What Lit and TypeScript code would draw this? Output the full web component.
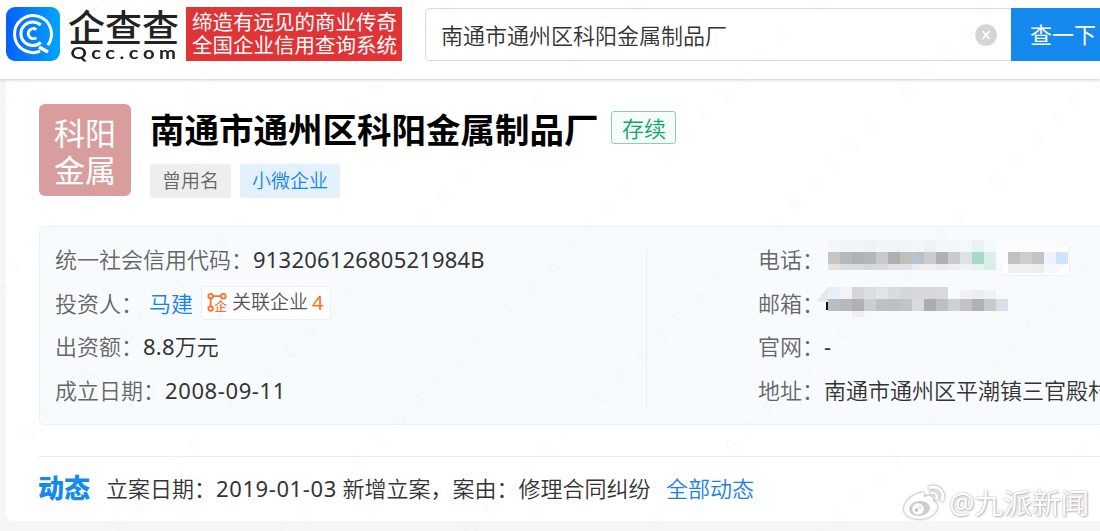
import { LitElement, html, svg, css } from 'lit';
import { customElement, property } from 'lit/decorators.js';

/** One run of mosaic cells: left edge, top edge, cell height and the fills */
interface MosaicRow {
  x: number;
  y: number;
  h: number;
  fills: string[];
}

const CELL = 12;

const PHONE_ROWS: MosaicRow[] = [
  { x: 4, y: 0, h: 12, fills: ['#f4f7f9', '#f1f4f6', '#f1f5f6', '#eff3f5', '#f2f5f7', '#f1f4f6', '#f2f5f7', '#f4f7f9', '#eff2f5', '#f4f7f9', '#f3f6f8', '#f4f8fa', '#e4f4f0', '#f3f9fa'] },
  { x: 4, y: 12, h: 12, fills: ['#c8c4c2', '#b2b8bc', '#adb3b9', '#b1b8b8', '#c9c9cd', '#b0aeb3', '#bfbfbc', '#b9c3cd', '#cdcbcc', '#b0aeb6', '#c7cbcf', '#dfe2e5', '#a8d9c5', '#dceeeb'] },
  { x: 4, y: 24, h: 6, fills: ['#e2e2e4', '#dadcdf', '#d9dbde', '#d7d8db', '#d9dadd', '#e0e1e4', '#e2e4e6', '#ecedef', '#edeff1', '#eaebed', '#eef0f2', '#f1f4f6', '#e5f3ef', '#daeee8'] },
  { x: 184, y: 12, h: 12, fills: ['#c3c1c0', '#cfcdcc', '#c5c4c0', '#eef3fd', '#cfe4fb'] },
  { x: 184, y: 24, h: 9, fills: ['#f0efef', '#f1f0f0', '#eeeded', '#f6f8fc', '#f4f9fe'] },
];

const MAIL_ROWS: MosaicRow[] = [
  { x: 4, y: 0, h: 12, fills: ['#e9eef8', '#f1f3f7', '#d4d6d9', '#dddee0', '#e1e4ec', '#d9dbde', '#d4d7da', '#d6d8db', '#d6d8da', '#d8d9dc'] },
  { x: 136, y: 3, h: 9, fills: ['#eff2f6', '#eaeef1', '#eff2f6'] },
  { x: 4, y: 12, h: 12, fills: ['#b9bdc4', '#b9b7ba', '#b1b0b4', '#c9cdd5', '#bfc1c1', '#bebfbe', '#bdc5cf', '#d9dadc', '#acacb0', '#bfbfc1', '#cfcfd1', '#c2c3c5', '#adb2b5', '#cbc9c6', '#d7dfea'] },
  { x: 28, y: 24, h: 6, fills: ['#edf0f4'] },
];

const cells = (rows: MosaicRow[]) =>
  rows.map(row =>
    row.fills.map((fill, i) => svg`<rect x=${row.x + i * CELL} y=${row.y} width=${CELL} height=${row.h} fill=${fill} />`)
  );

@customElement('info-row')
export class InfoRow extends LitElement {
  /** Field name, printed in front of the value */
  @property({ type: String }) label = '';

  static styles = css`
    :host {
      display: flex;
      align-items: center;
      height: 43.8px;
      white-space: nowrap;
      color: #333;
    }

    .label {
      color: #666;
    }

    .value {
      display: flex;
      align-items: center;
    }
  `;

  render() {
    return html`
      <span class="label">${this.label}：</span>
      <span class="value"><slot></slot></span>
    `;
  }
}

@customElement('app-root')
export class AppRoot extends LitElement {
  static styles = css`
    :host {
      display: block;
      position: relative;
      width: 1100px;
      height: 531px;
      overflow: hidden;
      background: #f6f6f6;
      color: #333;
      font-family: 'Noto Sans', 'Noto Sans CJK SC', sans-serif;
      font-size: 22px;
      font-weight: 350;
      line-height: 1;
      white-space: nowrap;
    }

    * {
      box-sizing: border-box;
    }

    svg {
      display: block;
      flex: none;
      overflow: visible;
    }

    /* Header */
    .header {
      position: relative;
      display: flex;
      align-items: flex-start;
      height: 79px;
      padding: 7px 0 0 6px;
      background: #fff;
      box-shadow: 0 1px 3px rgba(0, 0, 0, 0.2);
    }

    .brand {
      flex: none;
      width: 118px;
      padding-left: 8px;
      color: #222;
      font-family: 'Noto Sans CJK SC', sans-serif;
    }

    .brand__name {
      height: 38px;
      font-size: 37px;
      font-weight: 500;
      line-height: 38px;
    }

    .brand__domain {
      padding-left: 2px;
      font-family: Lato, sans-serif;
      font-size: 17px;
      font-weight: 700;
      letter-spacing: 3.8px;
      line-height: 16px;
      transform: scaleX(1.19);
      transform-origin: left;
    }

    .slogan {
      flex: none;
      width: 216px;
      height: 54px;
      margin-left: 8px;
      padding: 4px 0 0 6px;
      background: #e03436;
      color: #fff;
      font-size: 20.5px;
      font-weight: 400;
      line-height: 23px;
    }

    .search {
      flex: none;
      display: flex;
      align-items: center;
      justify-content: space-between;
      width: 586px;
      height: 53px;
      margin: 1px 0 0 23px;
      padding: 0 14px 0 15px;
      border: 1px solid #d9d9d9;
      border-right: 0;
      border-radius: 5px 0 0 5px;
    }

    .search__button {
      flex: none;
      width: 110px;
      height: 53px;
      margin-top: 1px;
      padding-left: 19px;
      background: #148aee;
      color: #fff;
      font-weight: 400;
      line-height: 53px;
    }

    /* Company card */
    .card {
      height: 442px;
      margin-left: 6px;
      padding: 25px 0 0 33px;
      background: #fff;
      border-radius: 0 0 0 7px;
    }

    .company {
      display: flex;
    }

    .avatar {
      width: 92px;
      height: 92px;
      margin-left: 0.4px;
      padding: 11px 0 0 14.6px;
      border-radius: 6px;
      background: #d99d9d;
      color: #fff;
      font-size: 31px;
      font-weight: 400;
      line-height: 37px;
    }

    .summary {
      margin-left: 18.6px;
    }

    .title {
      display: flex;
      align-items: center;
      height: 53px;
      gap: 13px;
    }

    .title__name {
      margin: 0;
      color: #000;
      font-size: 34.5px;
      font-weight: 700;
    }

    .status {
      width: 65px;
      height: 33px;
      margin-top: -6px;
      border: 1px solid #84d3b1;
      border-radius: 3px;
      background: #f6fcf9;
      color: #0aa965;
      line-height: 32px;
      text-align: center;
    }

    .tags {
      display: flex;
      gap: 9px;
      margin-top: 7px;
    }

    .tag {
      height: 34px;
      padding: 0 12px;
      border-radius: 3px;
      background: #eee;
      color: #666;
      font-size: 19px;
      line-height: 34px;
    }

    .tag--blue {
      background: #e3f1fd;
      color: #1585ee;
    }

    .panel {
      display: flex;
      height: 199px;
      margin-top: 28px;
      padding: 10px 0 0 15px;
      border: 1px solid #e9f2f8;
      border-right: 0;
      border-radius: 6px 0 0 6px;
      background: #f7fbfe;
    }

    .panel__column {
      flex: none;
      width: 591px;
    }

    .panel__divider {
      flex: none;
      width: 1px;
      height: 157px;
      margin: 14px 111px 0 0;
      background: #ececee;
    }

    .link {
      color: #1a80ee;
    }

    .link--person {
      margin-left: 6px;
    }

    .number {
      font-weight: 400;
      letter-spacing: 0.2px;
    }

    .date {
      font-weight: 400;
      letter-spacing: 0.6px;
    }

    .related {
      display: flex;
      align-items: center;
      width: 130px;
      height: 34px;
      margin-left: 8px;
      padding-left: 5px;
      border: 1px solid #eee;
      border-radius: 3px;
      background: #fff;
      color: #555;
      font-size: 19px;
    }

    .related__text {
      margin: 0 4px;
    }

    .related__count {
      color: #ff6f2c;
      font-size: 20px;
      font-weight: 400;
    }

    .related__glyph {
      fill: #ff6f2c;
      font-size: 12.5px;
      font-weight: 500;
    }

    .news {
      display: flex;
      align-items: center;
      height: 63px;
      margin-top: 31px;
      margin-left: -1px;
      border-top: 1px solid #ececec;
    }

    .news__mark {
      width: 68px;
      color: #148aee;
      font-size: 26px;
      font-weight: 900;
    }

    .news__link {
      margin-left: 15.5px;
    }

    /* Overlays */
    .pattern {
      position: absolute;
      inset: 0;
      pointer-events: none;
    }

    .pattern__text {
      font-family: 'Liberation Sans', sans-serif;
      font-size: 19px;
      font-weight: 400;
      fill: #000;
      fill-opacity: 0.015;
    }

    .credit {
      position: absolute;
      right: 11px;
      bottom: 10px;
      display: flex;
      align-items: center;
      gap: 4px;
      color: #fff;
      font-size: 28.6px;
      font-weight: 400;
      text-shadow: 0 0 2px #aaa, 1px 1px 2px #bbb;
    }

    .credit__logo {
      filter: drop-shadow(0 0 1px #aaa) drop-shadow(0 0 1px #ccc);
    }
  `;

  private renderLogo() {
    return html`
      <svg width="54" height="54" viewBox="0 0 54 54" fill="none" stroke="#fff" stroke-width="3">
        <defs>
          <linearGradient id="blue" x1="0" y1="0" x2="1" y2="0">
            <stop offset="0" stop-color="#0560ff" />
            <stop offset="1" stop-color="#02a4ff" />
          </linearGradient>
        </defs>
        <rect width="54" height="54" rx="9" fill="url(#blue)" stroke="none" />
        <path d="M34 44.200A18.500 18.500 0 1 1 41.800 38.200" />
        <path d="M33 40.200L42 45" stroke-width="3.600" />
        <path d="M34.800 18.200A11.800 11.800 0 1 0 34.800 35.400" />
        <path d="M30.300 22.600A5 5 0 1 0 30.300 30.600" />
      </svg>
    `;
  }

  private renderRelatedIcon() {
    return html`
      <svg width="21" height="21" viewBox="0 0 21 21" fill="none" stroke="#ff6f2c" stroke-width="1.800">
        <circle cx="3.600" cy="4.200" r="2.300" />
        <circle cx="16.400" cy="4.200" r="2.300" />
        <circle cx="3.600" cy="16.600" r="2.300" />
        <path d="M6 4.200H14M3.600 6.600V14.200" />
        <text class="related__glyph" x="7.600" y="19" stroke="none">企</text>
      </svg>
    `;
  }

  private renderPhone() {
    return html`
      <svg width="252" height="38" viewBox="0 0 252 38">
        <rect x="177.500" y="3.500" width="68" height="32" rx="3" fill="#fff" stroke="#efefef" />
        <path d="M176 0H241L236 12H184V24H176Z" fill="#fafbfd" />
        ${cells(PHONE_ROWS)}
        <path d="M232 33L244 23V33Z" fill="#fff" />
      </svg>
    `;
  }

  private renderMail() {
    return html`
      <svg width="190" height="32" viewBox="0 0 190 32">
        <path d="M-8 14.500L4 0V14.500Z" fill="#e8e8e6" />
        <rect x="2" y="15" width="3" height="8" fill="#111" />
        ${cells(MAIL_ROWS)}
      </svg>
    `;
  }

  private renderWeibo() {
    return html`
      <svg class="credit__logo" width="42" height="36" viewBox="0 0 42 36" fill="none">
        <path
          fill="#fff"
          d="M17 8C20 6 22 8 21 12C26 10 31 11 30 16C35 18 35 22 33 26C29 32 23 34 16 34C8 34 1 30 1 24C1 17 10 9 17 8Z"
        />
        <ellipse cx="16.500" cy="23.500" rx="10.500" ry="7.500" fill="#cdcdcd" transform="rotate(-8 16.500 23.500)" />
        <circle cx="15" cy="24" r="5.800" fill="#fff" />
        <circle cx="13.500" cy="25" r="1.700" fill="#bbb" />
        <circle cx="17" cy="22.500" r="0.900" fill="#bbb" />
        <path stroke="#fff" stroke-width="3" stroke-linecap="round" d="M27 2.500C35 0 42 7 39 15" />
        <path stroke="#fff" stroke-width="2.600" stroke-linecap="round" d="M28 8C32 7 35 10 33.500 13.500" />
      </svg>
    `;
  }

  render() {
    return html`
      <header class="header">
        ${this.renderLogo()}
        <div class="brand">
          <div class="brand__name">企查查</div>
          <div class="brand__domain">Qcc.com</div>
        </div>
        <div class="slogan">缔造有远见的商业传奇<br />全国企业信用查询系统</div>
        <div class="search">
          <span>南通市通州区科阳金属制品厂</span>
          <svg width="22" height="22" viewBox="0 0 22 22">
            <circle cx="11" cy="11" r="10.800" fill="#d5d5d5" />
            <path d="M7.500 7L14.500 15M14.500 7L7.500 15" stroke="#fff" stroke-width="1.800" />
          </svg>
        </div>
        <div class="search__button">查一下</div>
      </header>

      <main class="card">
        <section class="company">
          <div class="avatar">科阳<br />金属</div>
          <div class="summary">
            <div class="title">
              <h1 class="title__name">南通市通州区科阳金属制品厂</h1>
              <span class="status">存续</span>
            </div>
            <div class="tags">
              <span class="tag">曾用名</span>
              <span class="tag tag--blue">小微企业</span>
            </div>
          </div>
        </section>

        <section class="panel">
          <div class="panel__column">
            <info-row label="统一社会信用代码"><span class="number">91320612680521984B</span></info-row>
            <info-row label="投资人">
              <span class="link link--person">马建</span>
              <span class="related">
                ${this.renderRelatedIcon()}
                <span class="related__text">关联企业</span>
                <span class="related__count">4</span>
              </span>
            </info-row>
            <info-row label="出资额"><span class="number">8.8</span>万元</info-row>
            <info-row label="成立日期"><span class="date">2008-09-11</span></info-row>
          </div>
          <div class="panel__divider"></div>
          <div class="panel__column">
            <info-row label="电话">${this.renderPhone()}</info-row>
            <info-row label="邮箱">${this.renderMail()}</info-row>
            <info-row label="官网"><span class="number">-</span></info-row>
            <info-row label="地址">南通市通州区平潮镇三官殿村</info-row>
          </div>
        </section>

        <section class="news">
          <span class="news__mark">动态</span>
          <span>立案日期：<span class="date">2019-01-03</span> 新增立案，案由：修理合同纠纷</span>
          <span class="link news__link">全部动态</span>
        </section>
      </main>

      <svg class="pattern" width="1100" height="531" aria-hidden="true">
        <defs>
          <pattern
            id="code"
            width="216"
            height="126.500"
            patternUnits="userSpaceOnUse"
            patternTransform="translate(512 307) rotate(-45) translate(-26 -60)"
          >
            <text class="pattern__text" x="20" y="67" textLength="178">EE63F0F</text>
          </pattern>
        </defs>
        <rect width="1100" height="531" fill="url(#code)" />
      </svg>

      <div class="credit">
        ${this.renderWeibo()}
        <span>@九派新闻</span>
      </div>
    `;
  }
}

declare global {
  interface HTMLElementTagNameMap {
    'info-row': InfoRow;
    'app-root': AppRoot;
  }
}
